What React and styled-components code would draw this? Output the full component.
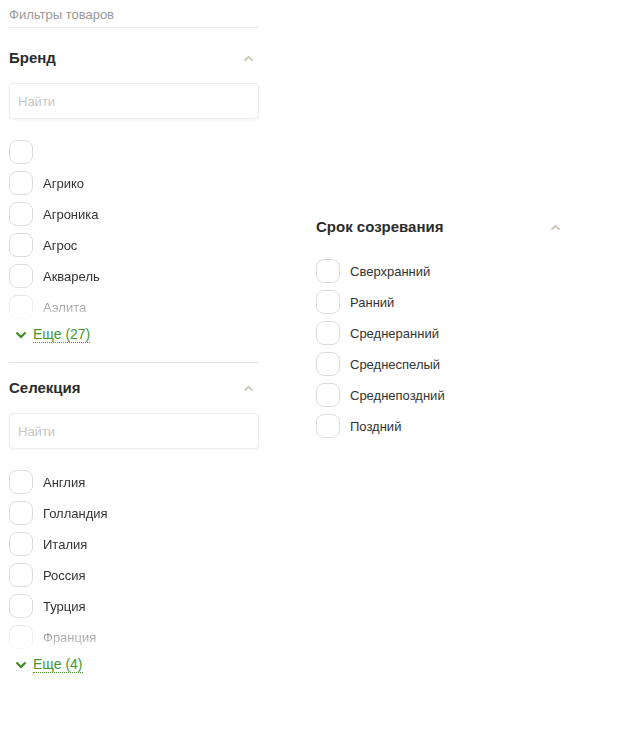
import React from 'react'
import styled, { createGlobalStyle } from 'styled-components'

const GlobalStyle = createGlobalStyle`
  body {
    margin: 0;
    background: #fff;
    font-family: "Liberation Sans", Arial, sans-serif;
  }
`

const Page = styled.div`
  display: grid;
  grid-template-columns: 250px 250px;
  column-gap: 57px;
  align-items: start;
  padding: 0 9px;
`

const Column = styled.div`
  display: flex;
  flex-direction: column;
  padding-top: ${(p) => p.offset || 0}px;
`

const Caption = styled.div`
  font-size: 13px;
  line-height: 16px;
  color: #999;
  padding: 7px 0 4px;
  border-bottom: 1px solid #e8e8e8;
  margin-bottom: 5px;
`

const Section = styled.div`
  padding: ${(p) => (p.plain ? '0' : '14px 0 19px')};
  border-bottom: ${(p) => (p.last || p.plain ? 'none' : '1px solid #e3e3e3')};
`

const Header = styled.div`
  display: flex;
  align-items: center;
  justify-content: space-between;
  height: 20px;
`

const Title = styled.div`
  font-size: 15px;
  font-weight: 700;
  color: #2b2b2b;
`

const Toggle = styled.svg`
  width: 11px;
  height: 7px;
  margin-right: 5px;
  margin-top: 2px;
`

const Search = styled.input`
  box-sizing: border-box;
  width: 100%;
  height: 36px;
  margin-top: 16px;
  border: 1px solid #ededed;
  border-radius: 4px;
  box-shadow: 0 1px 3px rgba(0, 0, 0, 0.05);
  padding: 0 8px;
  font-family: inherit;
  font-size: 13px;
  color: #333;
  outline: none;
  &::placeholder {
    color: #c6c6c6;
  }
`

const List = styled.div`
  display: flex;
  flex-direction: column;
  gap: 7px;
  margin-top: ${(p) => p.top}px;
  height: 179px;
  overflow: hidden;
  ${(p) =>
    p.fade &&
    `
    -webkit-mask-image: linear-gradient(to bottom, #000 calc(100% - 36px), rgba(0,0,0,0.15) 100%);
    mask-image: linear-gradient(to bottom, #000 calc(100% - 36px), rgba(0,0,0,0.15) 100%);
  `}
`

const Option = styled.label`
  display: flex;
  align-items: center;
  gap: 10px;
  height: 24px;
  flex-shrink: 0;
  font-size: 13px;
  color: #333;
  cursor: pointer;
`

const Box = styled.span`
  box-sizing: border-box;
  width: 24px;
  height: 24px;
  border: 1px solid #dcdcdc;
  border-radius: 8px;
  background: #fff;
  flex-shrink: 0;
`

const More = styled.div`
  display: flex;
  align-items: center;
  gap: 6px;
  margin-top: 7px;
  padding-left: 6px;
  height: 17px;
`

const MoreText = styled.span`
  font-size: 14px;
  line-height: 16px;
  color: #43952c;
  border-bottom: 1px dotted #43952c;
`

const ChevronUp = () => (
  <Toggle viewBox="0 0 11 7">
    <polyline points="1.5,5.5 5.5,1.8 9.5,5.5" fill="none" stroke="#cfc8bb" strokeWidth="2" />
  </Toggle>
)

const ChevronDown = () => (
  <svg width="12" height="8" viewBox="0 0 12 8">
    <polyline points="1.5,1.5 6,6 10.5,1.5" fill="none" stroke="#3e8a22" strokeWidth="2.2" />
  </svg>
)

const FilterBlock = ({ title, items, search, more, last, plain }) => (
  <Section last={last} plain={plain}>
    <Header>
      <Title>{title}</Title>
      <ChevronUp />
    </Header>
    {search && <Search placeholder="Найти" />}
    <List top={search ? 21 : 23} fade={!!more}>
      {items.map((item, i) => (
        <Option key={i}>
          <Box />
          {item}
        </Option>
      ))}
    </List>
    {more && (
      <More>
        <ChevronDown />
        <MoreText>{more}</MoreText>
      </More>
    )}
  </Section>
)

export default function App() {
  return (
    <>
      <GlobalStyle />
      <Page>
        <Column>
          <Caption>Фильтры товаров</Caption>
          <FilterBlock
            title="Бренд"
            search
            items={['', 'Агрико', 'Агроника', 'Агрос', 'Акварель', 'Аэлита']}
            more="Еще (27)"
          />
          <FilterBlock
            title="Селекция"
            search
            last
            items={['Англия', 'Голландия', 'Италия', 'Россия', 'Турция', 'Франция']}
            more="Еще (4)"
          />
        </Column>
        <Column offset={216}>
          <FilterBlock
            title="Срок созревания"
            plain
            items={['Сверхранний', 'Ранний', 'Среднеранний', 'Среднеспелый', 'Среднепоздний', 'Поздний']}
          />
        </Column>
      </Page>
    </>
  )
}
